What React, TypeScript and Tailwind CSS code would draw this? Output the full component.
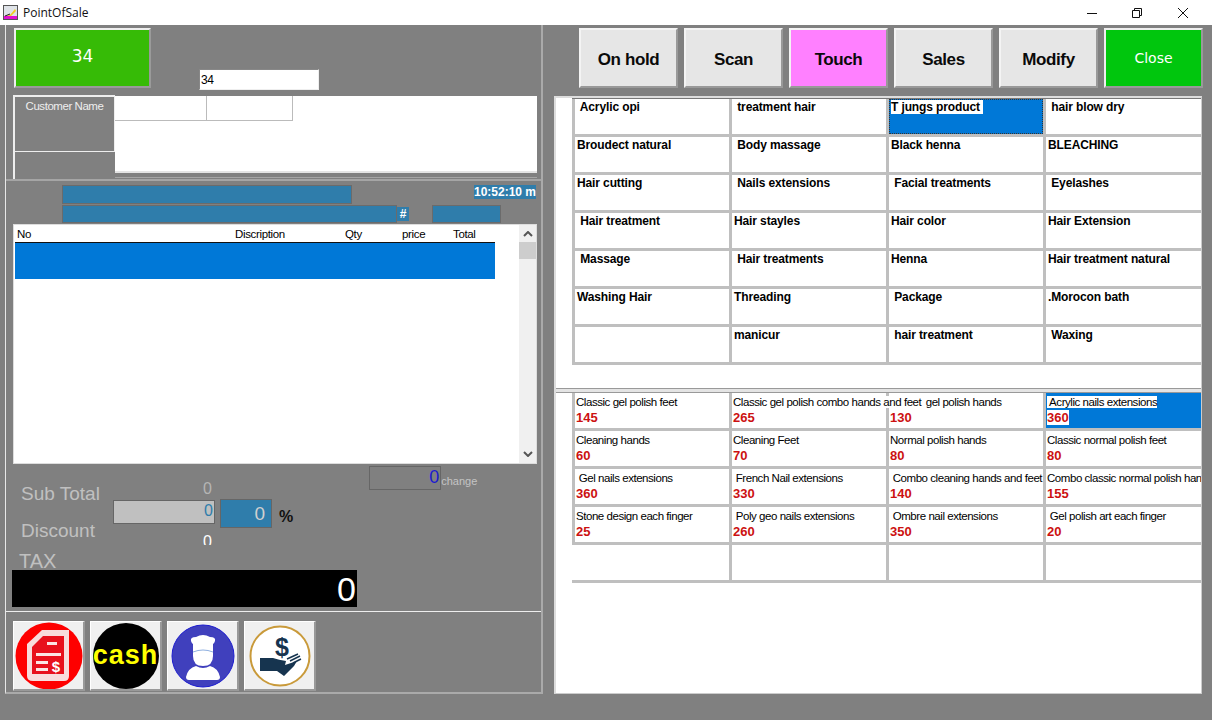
import type { ReactNode } from "react";

const sans = "font-['Liberation_Sans',Arial,sans-serif]";

// top grid: leading spaces are part of the item names
const categories = [
  " Acrylic opi", " treatment hair", "T jungs product ", " hair blow dry",
  "Broudect natural", " Body massage", "Black henna", "BLEACHING",
  "Hair cutting", " Nails extensions", " Facial treatments", " Eyelashes",
  " Hair treatment", "Hair stayles", "Hair color", "Hair Extension",
  " Massage", " Hair treatments", "Henna", "Hair treatment natural",
  "Washing Hair", "Threading", " Package", ".Morocon bath",
  "", "manicur", " hair treatment", " Waxing",
];

const products = [
  ["Classic gel polish feet", "145"],
  ["Classic gel polish combo hands and feet", "265"],
  ["             gel polish hands", "130"],
  [" Acrylic nails extensions", "360"],
  ["Cleaning hands", "60"],
  ["Cleaning Feet", "70"],
  ["Normal polish hands", "80"],
  ["Classic normal polish feet", "80"],
  [" Gel nails extensions", "360"],
  [" French Nail extensions", "330"],
  [" Combo cleaning hands and feet", "140"],
  ["Combo classic normal polish hands", "155"],
  ["Stone design each finger", "25"],
  [" Poly geo nails extensions", "260"],
  [" Ombre nail extensions", "350"],
  [" Gel polish art each finger", "20"],
  ["", ""],
  ["", ""],
  ["", ""],
  ["", ""],
];

function NavButton({ label, color = "bg-[#e6e6e6]" }: { label: string; color?: string }) {
  return (
    <button className={`${color} ${sans} w-[99px] h-[60px] pt-[3px] border-2 border-t-[#f4f4f4] border-l-[#f4f4f4] border-r-[#999] border-b-[#999] text-[17px] tracking-[-0.4px] font-bold text-[#0a0a0a]`}>
      {label}
    </button>
  );
}

function ImageButton({ children }: { children: ReactNode }) {
  return (
    <div className="w-[72px] h-[70px] bg-[#f0f0f0] border-t border-l border-[#fff] border-r-2 border-b-2 border-r-[#999] border-b-[#999] flex items-center justify-center overflow-hidden">
      {children}
    </div>
  );
}

function CategoryGrid() {
  return (
    <div className="ml-[16px] pl-[3px] pb-[3px] border-t border-[#777] bg-[#bfbfbf] grid grid-cols-[154px_154px_154px_155px] gap-[3px]">
      {categories.map((name, i) => {
        const selected = name.startsWith("T jungs");
        return (
          <div
            key={i}
            className={`h-[35px] px-[2px] pt-[1px] overflow-hidden text-[12px] leading-[15px] tracking-[-0.12px] font-bold text-black whitespace-pre ${selected ? "bg-[#0078d7] outline-1 outline-dotted outline-[#333] -outline-offset-1" : "bg-white"}`}
          >
            {selected ? <span className="bg-white">{name}</span> : name}
          </div>
        );
      })}
    </div>
  );
}

function ProductGrid() {
  return (
    <div className="ml-[16px] pl-[3px] pb-[3px] bg-[#bfbfbf] grid grid-cols-[154px_154px_154px_155px] gap-[3px]">
      {products.map(([name, price], i) => {
        const selected = i === 3;
        return (
          <div
            key={i}
            className={`h-[35px] pl-[1px] pt-[1px] whitespace-pre text-[11.5px] leading-[16px] tracking-[-0.45px] text-black ${i === 1 ? "relative z-10 overflow-visible" : "overflow-hidden"} ${selected ? "bg-[#0078d7]" : "bg-white"} ${i === 16 ? "-ml-[3px]" : ""}`}
          >
            <div>{selected ? <span className="bg-white">{name}</span> : <span className={i === 1 ? "bg-white" : ""}>{name}</span>}</div>
            <div className="font-bold text-[13px] leading-[15px] tracking-normal text-[#cc1111]">
              {selected ? <span className="bg-white">{price}</span> : price}
            </div>
          </div>
        );
      })}
    </div>
  );
}

function OrderPanel() {
  return (
    <div className="ml-[7px] h-[240px] w-[524px] bg-white border border-[#ddd] relative overflow-hidden shrink-0">
      <div className="h-[17px] pt-[2px] flex items-center text-[11.5px] tracking-[-0.35px] text-black">
        <span className="ml-[3px] w-[218px]">No</span>
        <span className="w-[110px]">Discription</span>
        <span className="w-[57px]">Qty</span>
        <span className="w-[51px]">price</span>
        <span>Total</span>
      </div>
      <div className="ml-[1px] w-[480px] h-[37px] bg-[#0078d7] border-t border-[#111]" />
      {/* scrollbar sits over the list */}
      <div className="absolute right-0 top-0 bottom-0 w-[17px] bg-[#f0f0f0] flex flex-col items-center">
        <svg width="10" height="6" viewBox="0 0 10 6" className="mt-[6px]">
          <path d="M1 5 L5 1 L9 5" fill="none" stroke="#555" strokeWidth="2" />
        </svg>
        <div className="mt-[5px] w-full h-[17px] bg-[#cdcdcd]" />
        <div className="flex-1" />
        <svg width="10" height="6" viewBox="0 0 10 6" className="mb-[6px]">
          <path d="M1 1 L5 5 L9 1" fill="none" stroke="#555" strokeWidth="2" />
        </svg>
      </div>
    </div>
  );
}

function Summary() {
  return (
    <div className="h-[106px] flex pl-[7px] overflow-hidden shrink-0">
      <div className="w-[100px] pt-[19px] text-[#c0c0c0]">
        <div className="pl-[8px] text-[19px] leading-[22px]">Sub Total</div>
        <div className="pl-[8px] mt-[15px] text-[19px] leading-[22px]">Discount</div>
        <div className="pl-[6px] mt-[8px] text-[20px] leading-[22px]">TAX</div>
      </div>
      <div className="w-[102px] flex flex-col items-end">
        <div className="mt-[15px] pr-[3px] h-[20px] text-[#b5b5b5] text-[16px] leading-[20px]">0</div>
        <div className="mt-[1px] w-full h-[24px] bg-[#c0c0c0] border border-[#666] text-right pr-[1px] text-[#2f7dab] text-[16px] leading-[20px]">0</div>
        <div className="mt-[8px] pr-[3px] h-[13px] overflow-hidden text-white text-[16px] leading-[20px]">0</div>
      </div>
      <div className="ml-[5px] mt-[35px] w-[52px] h-[29px] bg-[#2f7dab] border border-[#666] text-right pr-[6px] text-[#d0d0d0] text-[19px] leading-[27px]">0</div>
      <div className="ml-[7px] mt-[43px] text-[16px] leading-[20px] font-bold text-[#111]">%</div>
      <div className="ml-[76px] mt-[2px] w-[72px] h-[24px] border border-[#666] text-right pr-[1px] text-[#1a1ad0] text-[18px] leading-[21px]">0</div>
      <div className="ml-0 mt-[9px] text-[11px] leading-[16px] text-[#c4c4c4]">change</div>
    </div>
  );
}

function ReceiptIcon() {
  return (
    <svg width="68" height="68" viewBox="0 0 68 68">
      <circle cx="34" cy="34" r="33.5" fill="#fe0000" />
      <path d="M27 8 H54 V54 Q54 59 49 59 H18 Q12 59 12 54 V22 Z" fill="#f8dcdc" />
      <path d="M28 14 H49 V52 H17 V25 Z" fill="#e8101c" />
      <path d="M32 20 H42 V23 H32 Z M21 31 H46 V34 H21 Z M21 39 H33 V42 H21 Z M21 46 H33 V49 H21 Z" fill="#fbe4e4" />
      <text x="41" y="50" textAnchor="middle" fontFamily="Liberation Sans" fontWeight="700" fontSize="15" fill="#fff">$</text>
    </svg>
  );
}

function ChefIcon() {
  return (
    <svg width="64" height="64" viewBox="0 0 64 64">
      <circle cx="32" cy="32" r="31" fill="#4040bd" stroke="#1d1dd0" strokeWidth="1" />
      <path d="M20 17 Q19 13 25 13 Q32 9 39 13 Q45 13 44 17 Q43 20 42 20 V32 Q42 42 32 42 Q22 42 22 32 V20 Q21 20 20 17 Z" fill="#fff" />
      <path d="M22 28 Q32 24 42 28" fill="none" stroke="#8fb0e0" strokeWidth="1" />
      <path d="M25 42 Q32 46 39 42 Q47 44 49 53 Q49 56 46 56 H18 Q15 56 15 53 Q17 44 25 42 Z" fill="#fff" />
    </svg>
  );
}

function HandIcon() {
  return (
    <svg width="62" height="62" viewBox="0 0 62 62">
      <circle cx="31" cy="31" r="29.5" fill="#fff" stroke="#c99a3a" strokeWidth="2" />
      <text x="33" y="31" textAnchor="middle" fontFamily="Liberation Sans" fontWeight="700" fontSize="25" fill="#16344f">$</text>
      <path d="M11 33 H24 Q30 35 37 36 L36 40 L48 36 L45 41 L35 51 L28 46 H11 Z" fill="#16344f" />
      <path d="M38 34 L49 29 M41 36 L51 31 M44 38 L52 34" stroke="#16344f" strokeWidth="1.5" />
    </svg>
  );
}

export default function App() {
  return (
    <div className={`${sans} w-[1212px] h-[720px] overflow-hidden bg-[#808080]`}>
      {/* title bar */}
      <div className="h-[25px] bg-white flex items-center">
        <svg width="15" height="15" viewBox="0 0 15 15" className="ml-[3px]">
          <rect width="15" height="15" fill="#555" />
          <rect x="1" y="1" width="13" height="10" fill="#dfe3e8" />
          <rect x="1" y="11" width="13" height="3" fill="#e010d0" />
          <path d="M2 11 L7 10 L12 4 L13 6 L8 11 Z" fill="#f0d020" />
          <path d="M2 11 L7 9" stroke="#222" />
        </svg>
        <span className="ml-[5px] text-[12px] font-['Open_Sans',sans-serif] text-[#111]">PointOfSale</span>
        <div className="ml-auto flex items-center text-[#111]">
          <svg width="12" height="12" viewBox="0 0 12 12" className="mr-[33px]">
            <path d="M1 6.5 H11" stroke="#111" />
          </svg>
          <svg width="12" height="12" viewBox="0 0 12 12" className="mr-[34px]">
            <path d="M1.5 3.5 H8.5 V10.5 H1.5 Z M3.5 3.5 V1.5 H10.5 V8.5 H8.5" fill="none" stroke="#111" />
          </svg>
          <svg width="12" height="12" viewBox="0 0 12 12" className="mr-[23px]">
            <path d="M1 1 L11 11 M11 1 L1 11" stroke="#111" />
          </svg>
        </div>
      </div>

      <div className="flex h-[695px]">
        {/* left column */}
        <div className="w-[538px] ml-[5px] h-[669px] border-l border-r-2 border-b-2 border-l-[#e8e8e8] border-r-[#aaa] border-b-[#aaa] flex flex-col shrink-0">
          <div className="h-[156px] border-b-2 border-[#a5a5a5] px-[8px] pt-[3px] shrink-0">
            <div className="flex">
              <button className="w-[137px] h-[60px] pb-[2px] bg-[#36bb06] border-2 border-t-[#eee] border-l-[#eee] border-r-[#9a9a9a] border-b-[#9a9a9a] text-white text-[17px] font-['DejaVu_Sans',sans-serif]">
                34
              </button>
              <input
                readOnly
                value="34"
                className="ml-[48px] mt-[41px] w-[120px] h-[21px] bg-white border border-t-[#888] border-l-[#888] border-r-[#eee] border-b-[#eee] px-[1px] text-[12px] tracking-[-0.3px] text-black"
              />
            </div>
            <div className="mt-[5px] -ml-[1px] flex">
              <div className="w-[102px] h-[84px] border-l-2 border-t-2 border-[#eee] shrink-0">
                <div className="h-[55px] border-b border-r border-[#eee] text-center text-[11.5px] tracking-[-0.45px] leading-[15px] pt-[2px] text-[#eee]">Customer Name</div>
              </div>
              <div className="w-[422px] shrink-0">
                <div className="h-[77px] mt-[1px] bg-white border-b-2 border-[#e4e4e4]">
                  <div className="flex h-[25px]">
                    <div className="w-[92px] border-r border-b border-[#bbb]" />
                    <div className="w-[86px] border-r border-b border-[#bbb]" />
                  </div>
                </div>
                <div className="h-[5px] border-b border-[#a5a5a5]" />
              </div>
            </div>
          </div>

          {/* status bars */}
          <div className="h-[43px] shrink-0 flex flex-col pt-[4px]">
            <div className="flex pl-[56px]">
              <div className="w-[290px] h-[19px] bg-[#2f7dab] border border-[#6b6b6b]" />
              <div className="ml-[122px] w-[62px] h-[14px] bg-[#2f7dab] text-white text-[12px] leading-[14px] font-bold whitespace-nowrap">10:52:10 m</div>
            </div>
            <div className="flex pl-[56px] mt-[1px]">
              <div className="w-[335px] h-[18px] bg-[#2f7dab] border border-[#6b6b6b]" />
              <div className="w-[12px] h-[14px] mt-[2px] bg-[#2f7dab] text-white text-center text-[12px] leading-[14px] font-bold">#</div>
              <div className="ml-[23px] w-[69px] h-[18px] bg-[#2f7dab] border border-[#6b6b6b]" />
            </div>
          </div>

          <OrderPanel />
          <Summary />

          <div className="ml-[6px] h-[37px] w-[345px] bg-black text-right pr-[1px] text-white text-[34px] leading-[39px] shrink-0">0</div>

          <div className="mt-[4px] pt-[9px] pl-[7px] border-t border-[#eee] flex gap-[5px]">
            <ImageButton><ReceiptIcon /></ImageButton>
            <ImageButton>
              <div className="w-[66px] h-[66px] rounded-full bg-black flex items-center justify-center text-[#ffff00] text-[27px] font-bold tracking-[1px]">cash</div>
            </ImageButton>
            <ImageButton><ChefIcon /></ImageButton>
            <ImageButton><HandIcon /></ImageButton>
          </div>
        </div>

        {/* right column */}
        <div className="flex-1 min-w-0">
          <div className="flex gap-[6px] pl-[36px] pt-[3px]">
            <NavButton label="On hold" />
            <NavButton label="Scan" />
            <NavButton label="Touch" color="bg-[#ff80ff]" />
            <NavButton label="Sales" />
            <NavButton label="Modify" />
            <button className="w-[99px] h-[60px] bg-[#00c60d] border-2 border-t-[#eee] border-l-[#eee] border-r-[#999] border-b-[#999] text-white text-[14px] font-['DejaVu_Sans',sans-serif]">
              Close
            </button>
          </div>
          <div className="ml-[11px] mt-[8px] w-[648px] h-[598px] flex flex-col bg-[#e4e4e4] border-t-2 border-l-2 border-[#ddd] border-r border-b border-r-[#ccc] border-b-[#ccc] overflow-hidden">
            <div className="h-[291px] bg-white border-b border-[#999] shrink-0">
              <CategoryGrid />
            </div>
            <div className="mt-[3px] flex-1 bg-white border-t border-[#999]">
              <ProductGrid />
            </div>
          </div>
        </div>
      </div>
    </div>
  );
}
